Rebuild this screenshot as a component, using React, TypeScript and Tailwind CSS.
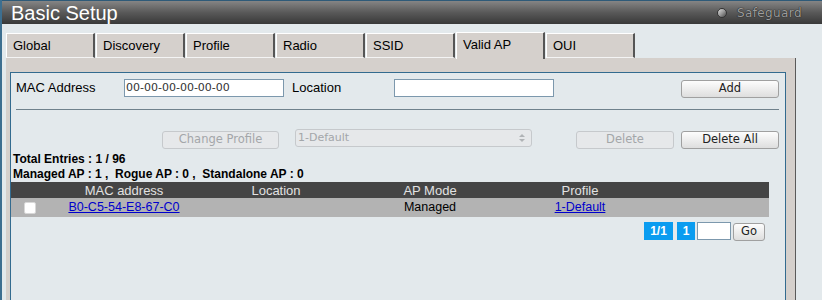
import React from 'react';

const tabs = ['Global', 'Discovery', 'Profile', 'Radio', 'SSID', 'Valid AP', 'OUI'];

function Btn({ label, w, disabled }: { label: string; w: string; disabled?: boolean }) {
  return (
    <button
      className={`${w} h-[18px] rounded-[3px] border text-[11.5px] leading-none font-['DejaVu_Sans',sans-serif] ${
        disabled
          ? 'border-[#c6c9cc] bg-[#e6e8ea] text-[#a3a6a9]'
          : 'border-[#a0a0a0] bg-gradient-to-b from-[#fdfdfd] to-[#dedede] text-[#222]'
      }`}
    >
      {label}
    </button>
  );
}

export default function App() {
  return (
    <div className="w-[822px] h-[300px] overflow-hidden bg-[#e3e9ec] border-l-2 border-[#3d6f90] font-['Liberation_Sans',Arial,sans-serif]">
      {/* 타이틀 바 */}
      <div className="h-[24px] border-t border-[#2e5a78] bg-gradient-to-b from-[#858585] via-[#595959] to-[#393939] flex items-center justify-between">
        <span className="pl-[9px] text-[20px] leading-none text-white">Basic Setup</span>
        <div className="flex items-center pr-[20px]">
          <span className="w-[10px] h-[10px] rounded-full bg-gradient-to-br from-[#e0e0e0] via-[#9a9a9a] to-[#4a4a4a] border border-[#333]" />
          <span className="ml-[10px] text-[12px] leading-[16px] text-[#9c9c9c] tracking-[0.4px] font-['DejaVu_Sans',sans-serif] [text-shadow:0_0_1px_#1e1e1e,0_0_1px_#1e1e1e]">
            Safeguard
          </span>
        </div>
      </div>

      {/* 탭 */}
      <div className="mt-[8px] h-[26px] pl-[4px] flex items-end">
        {tabs.map((t) => {
          const active = t === 'Valid AP';
          return (
            <div
              key={t}
              className={`w-[89px] mr-px flex items-center pl-[6px] text-[13px] text-black border-l border-t border-white border-r-2 border-r-[#555] bg-[#d5d0cc] ${
                active ? 'h-[27px] -mb-px relative z-10 pb-[3px]' : 'h-[25px] border-b border-b-[#f4f4f4]'
              }`}
            >
              {t}
            </div>
          );
        })}
      </div>

      {/* 탭 패널 */}
      <div className="ml-[4px] w-[790px] h-[300px] bg-[#d5d0cc] border-r border-[#5a5a5a] pt-[14px] pl-[4px]">
        <div className="w-[776px] h-[300px] border border-[#336b8f] bg-[#e3e9ec] pt-[6px]">
          {/* 입력 행 */}
          <div className="h-[18px] flex items-center pl-[5px] pr-[6px] text-[13px]">
            <span className="w-[108px]">MAC Address</span>
            <div className="w-[160px] h-[18px] border border-[#7c98ad] bg-white pl-[1px] text-[11px] leading-[16px] text-[#333] font-['DejaVu_Sans',sans-serif]">
              00-00-00-00-00-00
            </div>
            <span className="ml-[8px] w-[102px]">Location</span>
            <div className="w-[160px] h-[18px] border border-[#7c98ad] bg-white" />
            <div className="ml-auto">
              <Btn label="Add" w="w-[98px]" />
            </div>
          </div>

          <div className="mt-[12px] mx-[5px] mr-[6px] h-px bg-[#6f818c]" />

          {/* 버튼 행 */}
          <div className="mt-[19px] h-[18px] flex items-center pr-[6px]">
            <div className="ml-[151px]">
              <Btn label="Change Profile" w="w-[117px]" disabled />
            </div>
            <div className="ml-[16px] w-[237px] h-[18px] rounded-[3px] border border-[#c6c9cc] bg-[#e6e8ea] flex items-center justify-between pl-[2px] pr-[6px] text-[11px] text-[#a3a6a9] font-['DejaVu_Sans',sans-serif]">
              <span>1-Default</span>
              <span className="flex flex-col items-center gap-[2px]">
                <span className="w-0 h-0 border-x-[3px] border-x-transparent border-b-[3px] border-b-[#b0b3b6]" />
                <span className="w-0 h-0 border-x-[3px] border-x-transparent border-t-[3px] border-t-[#b0b3b6]" />
              </span>
            </div>
            <div className="ml-[44px]">
              <Btn label="Delete" w="w-[98px]" disabled />
            </div>
            <div className="ml-[7px]">
              <Btn label="Delete All" w="w-[98px]" />
            </div>
          </div>

          {/* 통계 */}
          <div className="mt-[4px] pl-[2px] text-[12px] font-bold leading-[16px]">
            <div>Total Entries : 1 / 96</div>
            <div className="-mt-px">Managed AP : 1 ,&nbsp; Rogue AP : 0 ,&nbsp; Standalone AP : 0</div>
          </div>

          {/* 테이블 */}
          <div className="w-[758px] text-[13px]">
            <div className="h-[16px] grid grid-cols-[38px_150px_154px_154px_146px_1fr] items-center bg-[#454545] text-[#e2e2e2] text-center leading-none">
              <span />
              <span>MAC address</span>
              <span>Location</span>
              <span>AP Mode</span>
              <span>Profile</span>
              <span />
            </div>
            <div className="h-[19px] grid grid-cols-[38px_150px_154px_154px_146px_1fr] items-center bg-[#b3b3b3] text-center leading-none text-[12.5px]">
              <span className="flex justify-center">
                <span className="w-[12px] h-[12px] rounded-[2px] bg-white border border-[#d8d8d8]" />
              </span>
              <span className="text-[#0000cc] underline">B0-C5-54-E8-67-C0</span>
              <span />
              <span>Managed</span>
              <span className="text-[#0000cc] underline">1-Default</span>
              <span />
            </div>

            {/* 페이지 */}
            <div className="mt-[5px] h-[18px] flex items-center justify-end pr-[4px]">
              <span className="w-[29px] h-[18px] bg-[#0a9cf0] text-white text-[12px] font-bold flex items-center justify-center">1/1</span>
              <span className="ml-[4px] w-[18px] h-[18px] bg-[#0a9cf0] text-white text-[12px] font-bold flex items-center justify-center">1</span>
              <span className="ml-[2px] w-[34px] h-[18px] border border-[#7c98ad] bg-white" />
              <div className="ml-[2px]">
                <Btn label="Go" w="w-[32px]" />
              </div>
            </div>
          </div>
        </div>
      </div>
    </div>
  );
}
